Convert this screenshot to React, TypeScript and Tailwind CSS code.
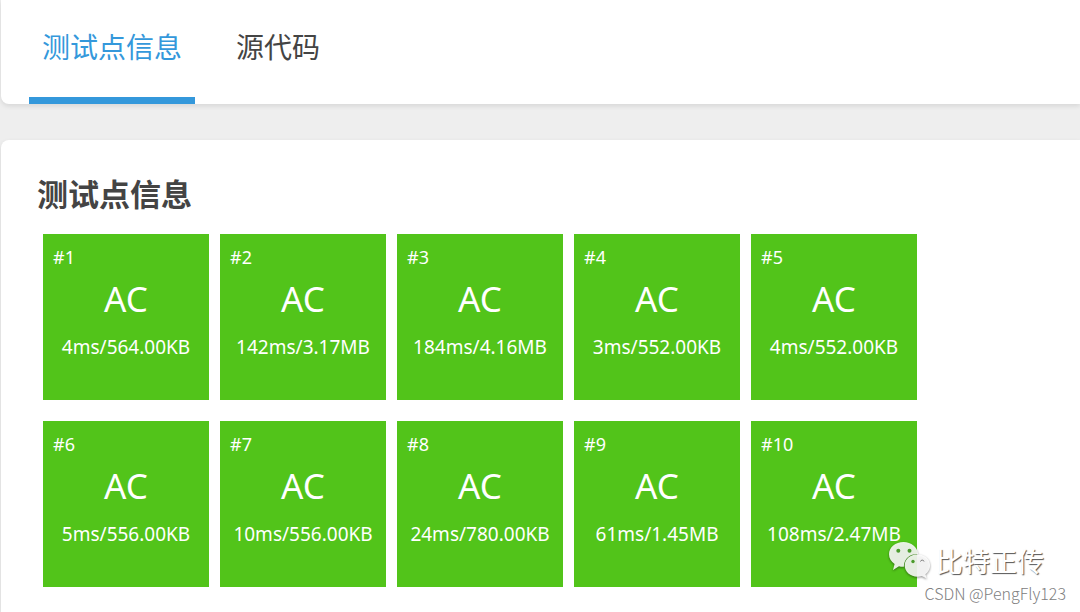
interface TestPoint {
    id: number;
    status: string;
    time: string;
    memory: string;
}

const testPoints: TestPoint[] = [
    { id: 1, status: 'AC', time: '4ms', memory: '564.00KB' },
    { id: 2, status: 'AC', time: '142ms', memory: '3.17MB' },
    { id: 3, status: 'AC', time: '184ms', memory: '4.16MB' },
    { id: 4, status: 'AC', time: '3ms', memory: '552.00KB' },
    { id: 5, status: 'AC', time: '4ms', memory: '552.00KB' },
    { id: 6, status: 'AC', time: '5ms', memory: '556.00KB' },
    { id: 7, status: 'AC', time: '10ms', memory: '556.00KB' },
    { id: 8, status: 'AC', time: '24ms', memory: '780.00KB' },
    { id: 9, status: 'AC', time: '61ms', memory: '1.45MB' },
    { id: 10, status: 'AC', time: '108ms', memory: '2.47MB' },
];

const TestCase = ({ point }: { point: TestPoint }) => (
    <li className="size-[166px] bg-[#52c41a] text-center text-white">
        <div className="px-[10px] pt-[11px] text-left text-[18px] leading-6">#{point.id}</div>
        <div className="pt-2 text-[35px] leading-11">{point.status}</div>
        <div className="pt-[14px] text-[19px] leading-6 whitespace-nowrap">
            {point.time}/{point.memory}
        </div>
    </li>
);

const WeChatIcon = () => (
    <svg width="44" height="42" viewBox="0 0 44 42" className="drop-shadow-[0_1px_1px_rgba(0,0,0,0.5)]" aria-hidden="true">
        <path
            d="M15.500 1C7.500 1 1 6.400 1 13.300c0 4 2.200 7.400 5.600 9.700L5 29l6-3.800c1.500.4 3 .6 4.800.5C16.100 17.500 21.800 13 30 13 29.600 6.200 23.300 1 15.500 1Z"
            fill="#fff"
            fillOpacity="0.88"
        />
        <path
            d="M29.500 13.300C22.400 13.300 16.700 18.300 16.700 24.500S22.400 35.700 29.500 35.700c1.500 0 3-.2 4.300-.6l5 2.500-1.400-4.400c2.900-2.100 4.700-5.200 4.700-8.700 0-6.200-5.600-11.200-12.600-11.200Z"
            fill="#fff"
            fillOpacity="0.88"
        />
        <g fill="#4b9b2c">
            <circle cx="10.300" cy="9.800" r="2" />
            <circle cx="21.500" cy="9.800" r="2" />
            <circle cx="25" cy="20.500" r="1.700" />
        </g>
        <path d="M32.500 20.500a1.800 1.800 0 0 1 3.500 0" fill="none" stroke="#777" strokeWidth="1" />
    </svg>
);

const Watermark = () => (
    <div className="pointer-events-none absolute right-[14px] bottom-[9px] flex flex-col items-end">
        <div className="flex items-center gap-1 pr-[22px]">
            <WeChatIcon />
            <span className="text-[27px] leading-10 text-white [text-shadow:1px_1px_1px_#555]">比特正传</span>
        </div>
        <span className="font-['Noto_Sans_CJK_SC',sans-serif] text-[16px] leading-5 font-light text-[#808080]">
            CSDN @PengFly123
        </span>
    </div>
);

export default function App() {
    return (
        <div className="relative min-h-screen bg-[#eee] pl-px font-['Noto_Sans','Noto_Sans_CJK_SC',sans-serif] text-[#444]">
            <nav className="flex gap-7 rounded-bl-lg bg-white pl-7 text-[28px] leading-10 shadow-[0_2px_5px_rgba(0,0,0,0.1)]">
                <button type="button" className="border-b-[7px] border-[#3498db] px-[13px] pt-[27px] pb-[30px] text-[#3498db]">
                    测试点信息
                </button>
                <button type="button" className="border-b-[7px] border-transparent px-[13px] pt-[27px] pb-[30px]">
                    源代码
                </button>
            </nav>

            <main className="mt-9 min-h-[472px] rounded-tl-lg bg-white pt-[30px] pl-9 shadow-[0_2px_5px_rgba(0,0,0,0.1)]">
                <h3 className="text-[31px] leading-12 font-bold">测试点信息</h3>
                <ul className="mt-4 ml-[6px] flex max-w-[880px] flex-wrap gap-x-[11px] gap-y-[21px]">
                    {testPoints.map((point) => (
                        <TestCase key={point.id} point={point} />
                    ))}
                </ul>
            </main>

            <Watermark />
        </div>
    );
}
